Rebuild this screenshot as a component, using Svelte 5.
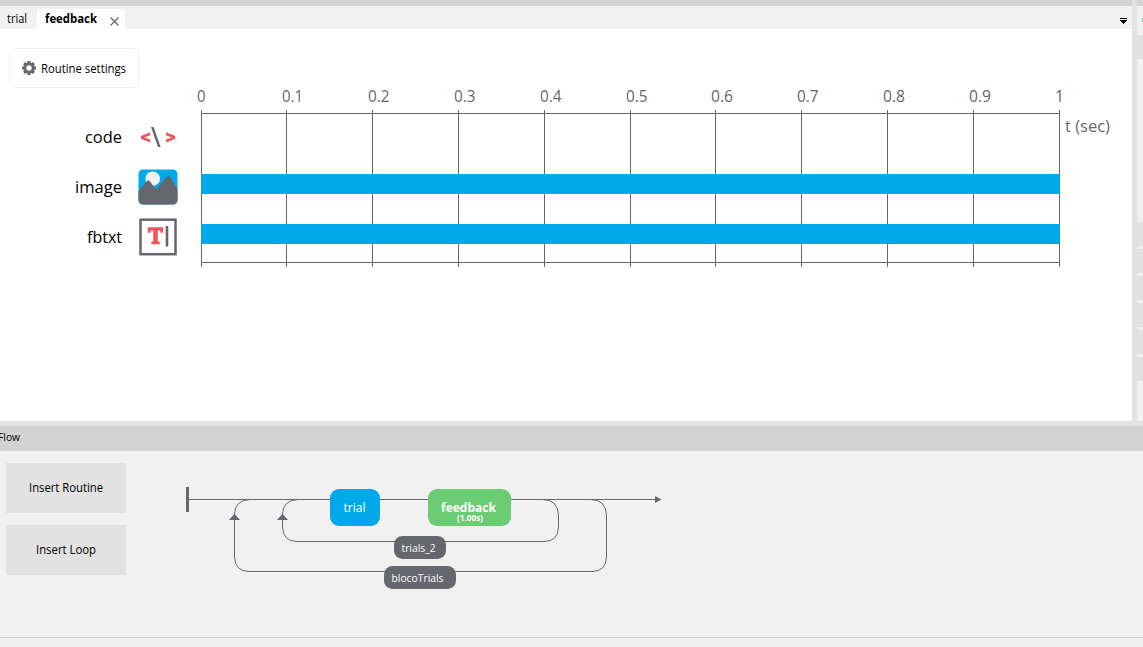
<script>
  const ticks = [
    { x: 201, label: '0', start: 197, width: 8.5 },
    { x: 286, label: '0.1', start: 282, width: 21 },
    { x: 372, label: '0.2', start: 368, width: 21.5 },
    { x: 458, label: '0.3', start: 454, width: 21.5 },
    { x: 544, label: '0.4', start: 540, width: 21.5 },
    { x: 630, label: '0.5', start: 626, width: 21.5 },
    { x: 715, label: '0.6', start: 711, width: 22 },
    { x: 801, label: '0.7', start: 797, width: 21.5 },
    { x: 887, label: '0.8', start: 883, width: 22 },
    { x: 973, label: '0.9', start: 969, width: 22 },
    { x: 1059, label: '1', start: 1055, width: 9 }
  ];
  const components = [
    { name: 'code', start: 85, width: 37, y: 143 },
    { name: 'image', start: 75, width: 47, y: 193 },
    { name: 'fbtxt', start: 87, width: 35, y: 243 }
  ];
  const categories = [1, 2, 3, 4, 5, 6];
  const teeth = [0, 45, 90, 135, 180, 225, 270, 315];
</script>

{#snippet caption(text, width, bold = false)}
  <svg class="caption" width={width} height="18">
    <text class:bold x="0" y="13" textLength={width} lengthAdjust="spacingAndGlyphs">{text}</text>
  </svg>
{/snippet}

<div class="app">
  <div class="upper">
    <main class="routines">
      <div class="strip"></div>
      <nav class="tabs">
        <div class="tab">{@render caption('trial', 20)}</div>
        <div class="tab active">
          {@render caption('feedback', 52, true)}
          <svg class="close" width="9" height="9" viewBox="0 0 9 9"><path d="M.5.5 8.5 8.5M8.5.5.5 8.5" /></svg>
        </div>
        <svg class="dropdown" width="7" height="6" viewBox="0 0 7 6" shape-rendering="crispEdges">
          <path d="M0 0h7v1H0zM0 2h7v1H6v1H5v1H4v1H3V5H2V4H1V3H0z" />
        </svg>
      </nav>
      <section class="routine">
        <svg class="timeline" width="1132" height="250" viewBox="0 29 1132 250">
          <g class="dark" shape-rendering="crispEdges">
            {#each ticks as t}
              <rect x={t.x} y="110" width="1" height="157" />
            {/each}
            <rect x="201" y="113" width="859" height="1" />
            <rect x="201" y="262" width="859" height="1" />
          </g>
          <g class="axis">
            {#each ticks as t}
              <text x={t.start} y="102" textLength={t.width} lengthAdjust="spacingAndGlyphs">{t.label}</text>
            {/each}
            <text x="1065" y="132" textLength="45" lengthAdjust="spacingAndGlyphs">t (sec)</text>
          </g>
          <rect class="bar" x="201" y="174" width="859" height="20" />
          <rect class="bar" x="201" y="224" width="859" height="20" />
          <g class="names">
            {#each components as c}
              <text x={c.start} y={c.y} textLength={c.width} lengthAdjust="spacingAndGlyphs">{c.name}</text>
            {/each}
          </g>
          <g>
            <path class="red" d="M150.200 132.300v3l-5.900 2.100 5.900 2.200v3l-9.200-3.900v-2.600zM166 132.300v3l5.900 2.100-5.900 2.200v3l9.200-3.900v-2.600z" />
            <path class="dark" d="M151 127h2.600l7 20H158z" />
          </g>
          <clipPath id="photo"><rect x="138.500" y="169.500" width="39" height="35" rx="4.500" /></clipPath>
          <g clip-path="url(#photo)">
            <rect class="bar" x="138" y="169" width="40" height="36" />
            <circle cx="152.700" cy="178.700" r="7.300" fill="#f1f1f1" />
            <path class="dark" d="M138 191.500 147 181q1.300-1.200 2.600 0l6.400 8.600 10.500-12.500q1.800-1.800 3.600 0L178 190v15h-40z" />
          </g>
          <g>
            <rect x="140.500" y="219.700" width="35" height="34.500" fill="none" stroke="#66666e" stroke-width="2.500" />
            <path class="red" d="M147.800 227.300h15.400v5.500h-2.700l-.4-2.300h-2.300v11.100h1.900v2.700h-8.400v-2.700h1.900v-11.100h-2.300l-.4 2.300h-2.700z" />
            <rect class="dark" x="165.700" y="226" width="2.600" height="20.500" />
          </g>
        </svg>
        <button class="settings">
          <svg class="gear" width="14" height="14" viewBox="-7 -7 14 14">
            <g class="dark">
              {#each teeth as angle}
                <path d="M-1.900-4 -1.500-6.900H1.500L1.900-4z" transform="rotate({angle})" />
              {/each}
            </g>
            <circle r="3.950" fill="none" stroke="#66666e" stroke-width="2.500" />
          </svg>
          {@render caption('Routine settings', 85)}
        </button>
      </section>
    </main>
    <aside class="components">
      <div class="strip"></div>
      <div class="tools"><i></i></div>
      <div class="heading"></div>
      <div class="favorites"></div>
      <div class="categories">
        {#each categories as c (c)}<div></div>{/each}
      </div>
    </aside>
  </div>
  <header class="flow-title">{@render caption('Flow', 22)}</header>
  <section class="flow">
    <div class="actions">
      <button>{@render caption('Insert Routine', 74)}</button>
      <button>{@render caption('Insert Loop', 60)}</button>
    </div>
    <svg class="diagram" width="520" height="130" viewBox="170 470 520 130">
      <g class="wires">
        <path d="M188 499.500H656" />
        <path d="M298 499.500Q282.500 500 282.500 515V527Q283 541.500 297 541.500H544Q558 541.500 558.500 527V515Q558 500 543 499.500" />
        <path d="M250 499.500Q234.500 500 234.500 515V557Q235 571.500 249 571.500H592Q606 571.500 606.500 557V515Q606 500 591 499.500" />
      </g>
      <g class="dark">
        <rect x="186" y="487" width="3" height="25" />
        <path d="M655 496v7l6.500-3.500zM229 520h11l-5.500-6.300zM277 520h11l-5.500-6.300z" />
        <rect x="394" y="536" width="52" height="23" rx="8.500" />
        <rect x="384" y="566" width="72" height="23" rx="8.500" />
      </g>
      <rect class="bar" x="330" y="489" width="50" height="37" rx="9" />
      <rect x="428" y="489" width="83" height="37" rx="9" fill="#6ccc74" />
      <g fill="#fff">
        <text x="343.500" y="512" font-size="13.300" textLength="22" lengthAdjust="spacingAndGlyphs">trial</text>
        <text class="bold" x="441" y="512" font-size="13" textLength="55" lengthAdjust="spacingAndGlyphs">feedback</text>
        <text class="bold" x="457" y="521" font-size="8" textLength="26" lengthAdjust="spacingAndGlyphs">(1.00s)</text>
        <text x="401.500" y="552" font-size="11.500" textLength="34" lengthAdjust="spacingAndGlyphs">trials_2</text>
        <text x="391.500" y="582" font-size="11.500" textLength="52" lengthAdjust="spacingAndGlyphs">blocoTrials</text>
      </g>
    </svg>
  </section>
  <footer></footer>
</div>

<style>
  :global(body) { margin: 0; }
  .app {
    width: 1143px;
    height: 647px;
    display: flex;
    flex-direction: column;
    overflow: hidden;
    background: #f1f1f1;
    font-family: "Open Sans", "Noto Sans", sans-serif;
  }
  svg { display: block; flex: none; }
  button { border: 0; padding: 0; font: inherit; display: flex; align-items: center; }
  .caption { overflow: visible; font-size: 12px; fill: #000; }
  .bold { font-weight: 700; }
  .dark { fill: #66666e; }
  .red { fill: #f2545b; }
  .bar { fill: #02a9ea; }
  .upper { height: 421px; display: flex; gap: 5px; background: #e2e2e2; border-bottom: 5px solid #e2e2e2; }
  .routines { width: 1132px; display: flex; flex-direction: column; }
  .strip { height: 6px; background: #d3d3d3; }
  .tabs { height: 23px; display: flex; align-items: flex-end; background: #f1f1f1; }
  .tab { box-sizing: border-box; width: 37px; height: 20px; padding: 1px 0 0 7px; display: flex; }
  .tab.active { width: 88px; padding-left: 8px; background: #fff; border-radius: 3px 3px 0 0; }
  .close { margin: 7px 0 0 13px; fill: none; stroke: #66666e; stroke-width: 1.2; }
  .dropdown { margin: 0 5px 5px auto; }
  .routine { flex: 1; display: grid; align-items: start; justify-items: start; background: #fff; }
  .timeline, .settings { grid-area: 1 / 1; }
  .settings {
    box-sizing: border-box;
    width: 131px;
    height: 40px;
    margin: 19px 0 0 9px;
    padding: 1px 0 0 12px;
    gap: 5px;
    border: 1px solid #f1f1f1;
    border-radius: 6px;
    background: #fff;
  }
  .gear { margin-bottom: 2px; }
  .axis { fill: #66666e; font-size: 16.5px; }
  .names { fill: #000; font-size: 17px; }
  .components { width: 6px; background: #f1f1f1; }
  .tools { height: 29px; display: flex; justify-content: flex-end; }
  .tools i { width: 1px; height: 4px; margin-top: 12px; background: #7ccd87; }
  .heading { height: 24px; background: #e2e2e2; }
  .favorites { height: 163px; }
  .categories { display: grid; gap: 3px; }
  .categories div { height: 24px; background: #e2e2e2; }
  .flow-title { height: 25px; background: #d3d3d3; }
  .flow-title .caption { margin: 2px 0 0 -2px; font-size: 11.5px; }
  .flow { height: 186px; display: flex; gap: 44px; }
  .actions { width: 120px; margin: 12px 0 0 6px; display: flex; flex-direction: column; gap: 12px; }
  .actions button { height: 50px; justify-content: center; background: #e2e2e2; }
  .diagram { margin-top: 19px; }
  .wires { fill: none; stroke: #66666e; stroke-width: 1; }
  footer { height: 9px; border-top: 1px solid #d3d3d3; background: #efefef; }
</style>
